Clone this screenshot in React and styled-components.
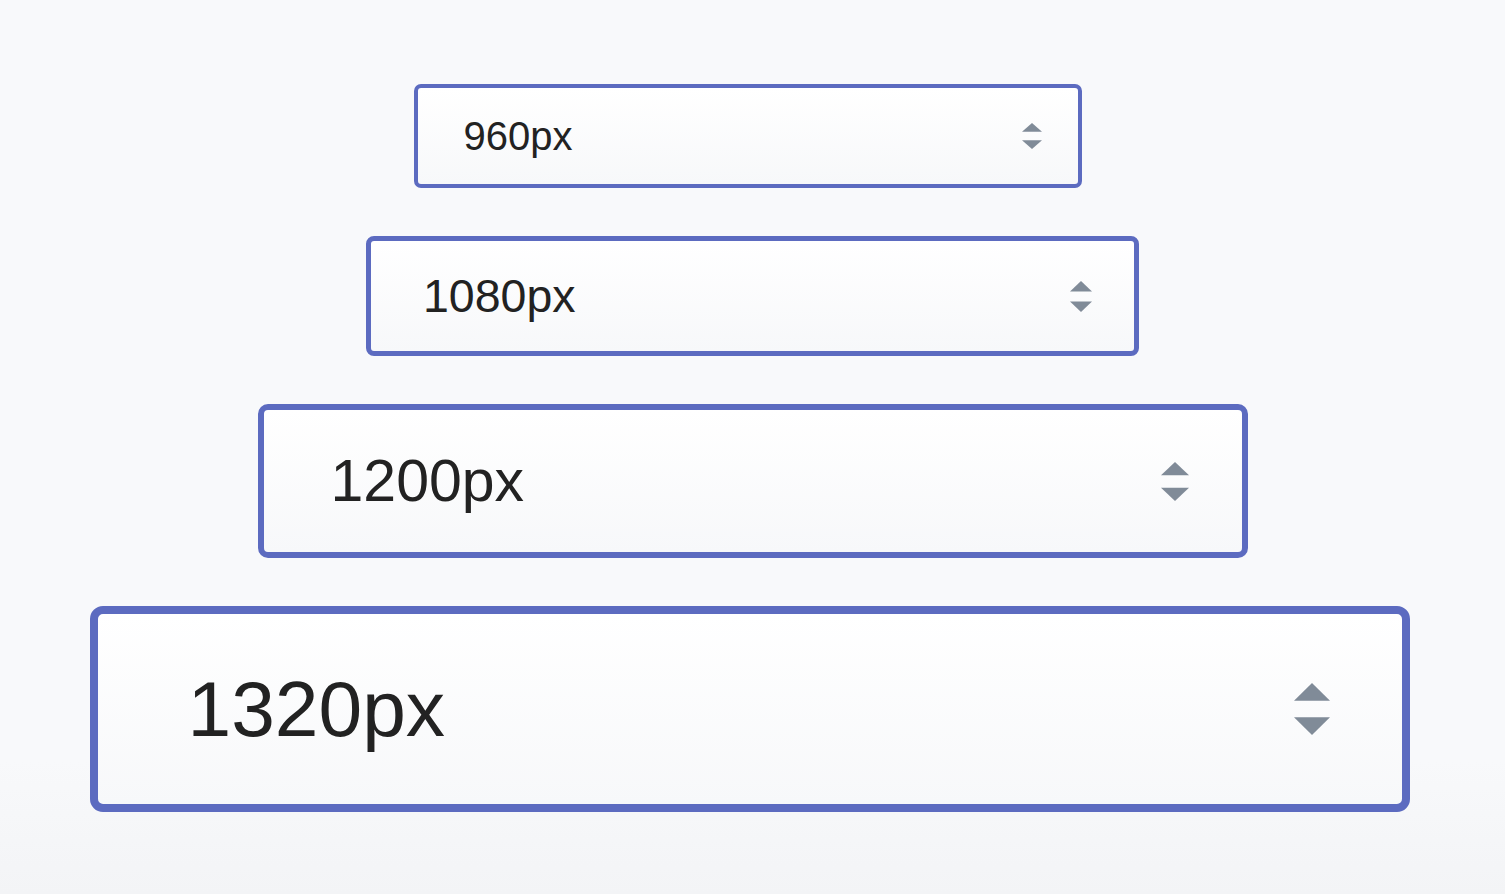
import React from "react";
import styled, { createGlobalStyle } from "styled-components";

const GlobalStyle = createGlobalStyle`
  html, body {
    margin: 0;
    padding: 0;
  }
  body {
    font-family: "Liberation Sans", Arial, sans-serif;
    background: linear-gradient(#f8f9fb, #f8f9fb 85%, #f3f4f6);
    min-height: 894px;
  }
`;

const Page = styled.div`
  display: flex;
  flex-direction: column;
  align-items: center;
  gap: 48px;
  padding-top: 84px;
  min-height: 894px;
  box-sizing: border-box;
`;

// nudge shifts a box left by half its value so it lines up with the reference
const SizeSelect = styled.div`
  box-sizing: border-box;
  display: flex;
  align-items: center;
  justify-content: space-between;
  width: ${(p) => p.$w}px;
  height: ${(p) => p.$h}px;
  margin-right: ${(p) => p.$nudge}px;
  padding: 0 ${(p) => p.$padR}px 0 ${(p) => p.$padL}px;
  border: ${(p) => p.$border}px solid #5c6bc0;
  border-radius: ${(p) => p.$radius}px;
  background: linear-gradient(#ffffff, #f7f8fa);
  cursor: pointer;
`;

const Value = styled.span`
  font-size: ${(p) => p.$font}px;
  color: #222222;
  line-height: 1;
`;

const Arrows = styled.svg`
  flex: none;
`;

const sizes = [
  { label: "960px", w: 668, h: 104, border: 4, radius: 7, font: 40, padL: 46, padR: 36, aw: 20, ah: 26, nudge: 10 },
  { label: "1080px", w: 773, h: 120, border: 5, radius: 8, font: 46.5, padL: 52, padR: 42, aw: 22, ah: 31, nudge: 0 },
  { label: "1200px", w: 990, h: 154, border: 6, radius: 10, font: 59, padL: 67, padR: 53, aw: 28, ah: 39, nudge: 0 },
  { label: "1320px", w: 1320, h: 206, border: 8, radius: 13, font: 78.5, padL: 90, padR: 72, aw: 36, ah: 52, nudge: 6 },
];

function UpDown({ w, h }) {
  const tri = h * 0.34;
  return (
    <Arrows width={w} height={h} viewBox={`0 0 ${w} ${h}`}>
      <polygon points={`0,${tri} ${w / 2},0 ${w},${tri}`} fill="#808b98" />
      <polygon points={`0,${h - tri} ${w / 2},${h} ${w},${h - tri}`} fill="#808b98" />
    </Arrows>
  );
}

export default function App() {
  return (
    <>
      <GlobalStyle />
      <Page>
        {sizes.map((s) => (
          <SizeSelect
            key={s.label}
            $w={s.w}
            $h={s.h}
            $border={s.border}
            $radius={s.radius}
            $padL={s.padL}
            $padR={s.padR}
            $nudge={s.nudge}
          >
            <Value $font={s.font}>{s.label}</Value>
            <UpDown w={s.aw} h={s.ah} />
          </SizeSelect>
        ))}
      </Page>
    </>
  );
}
